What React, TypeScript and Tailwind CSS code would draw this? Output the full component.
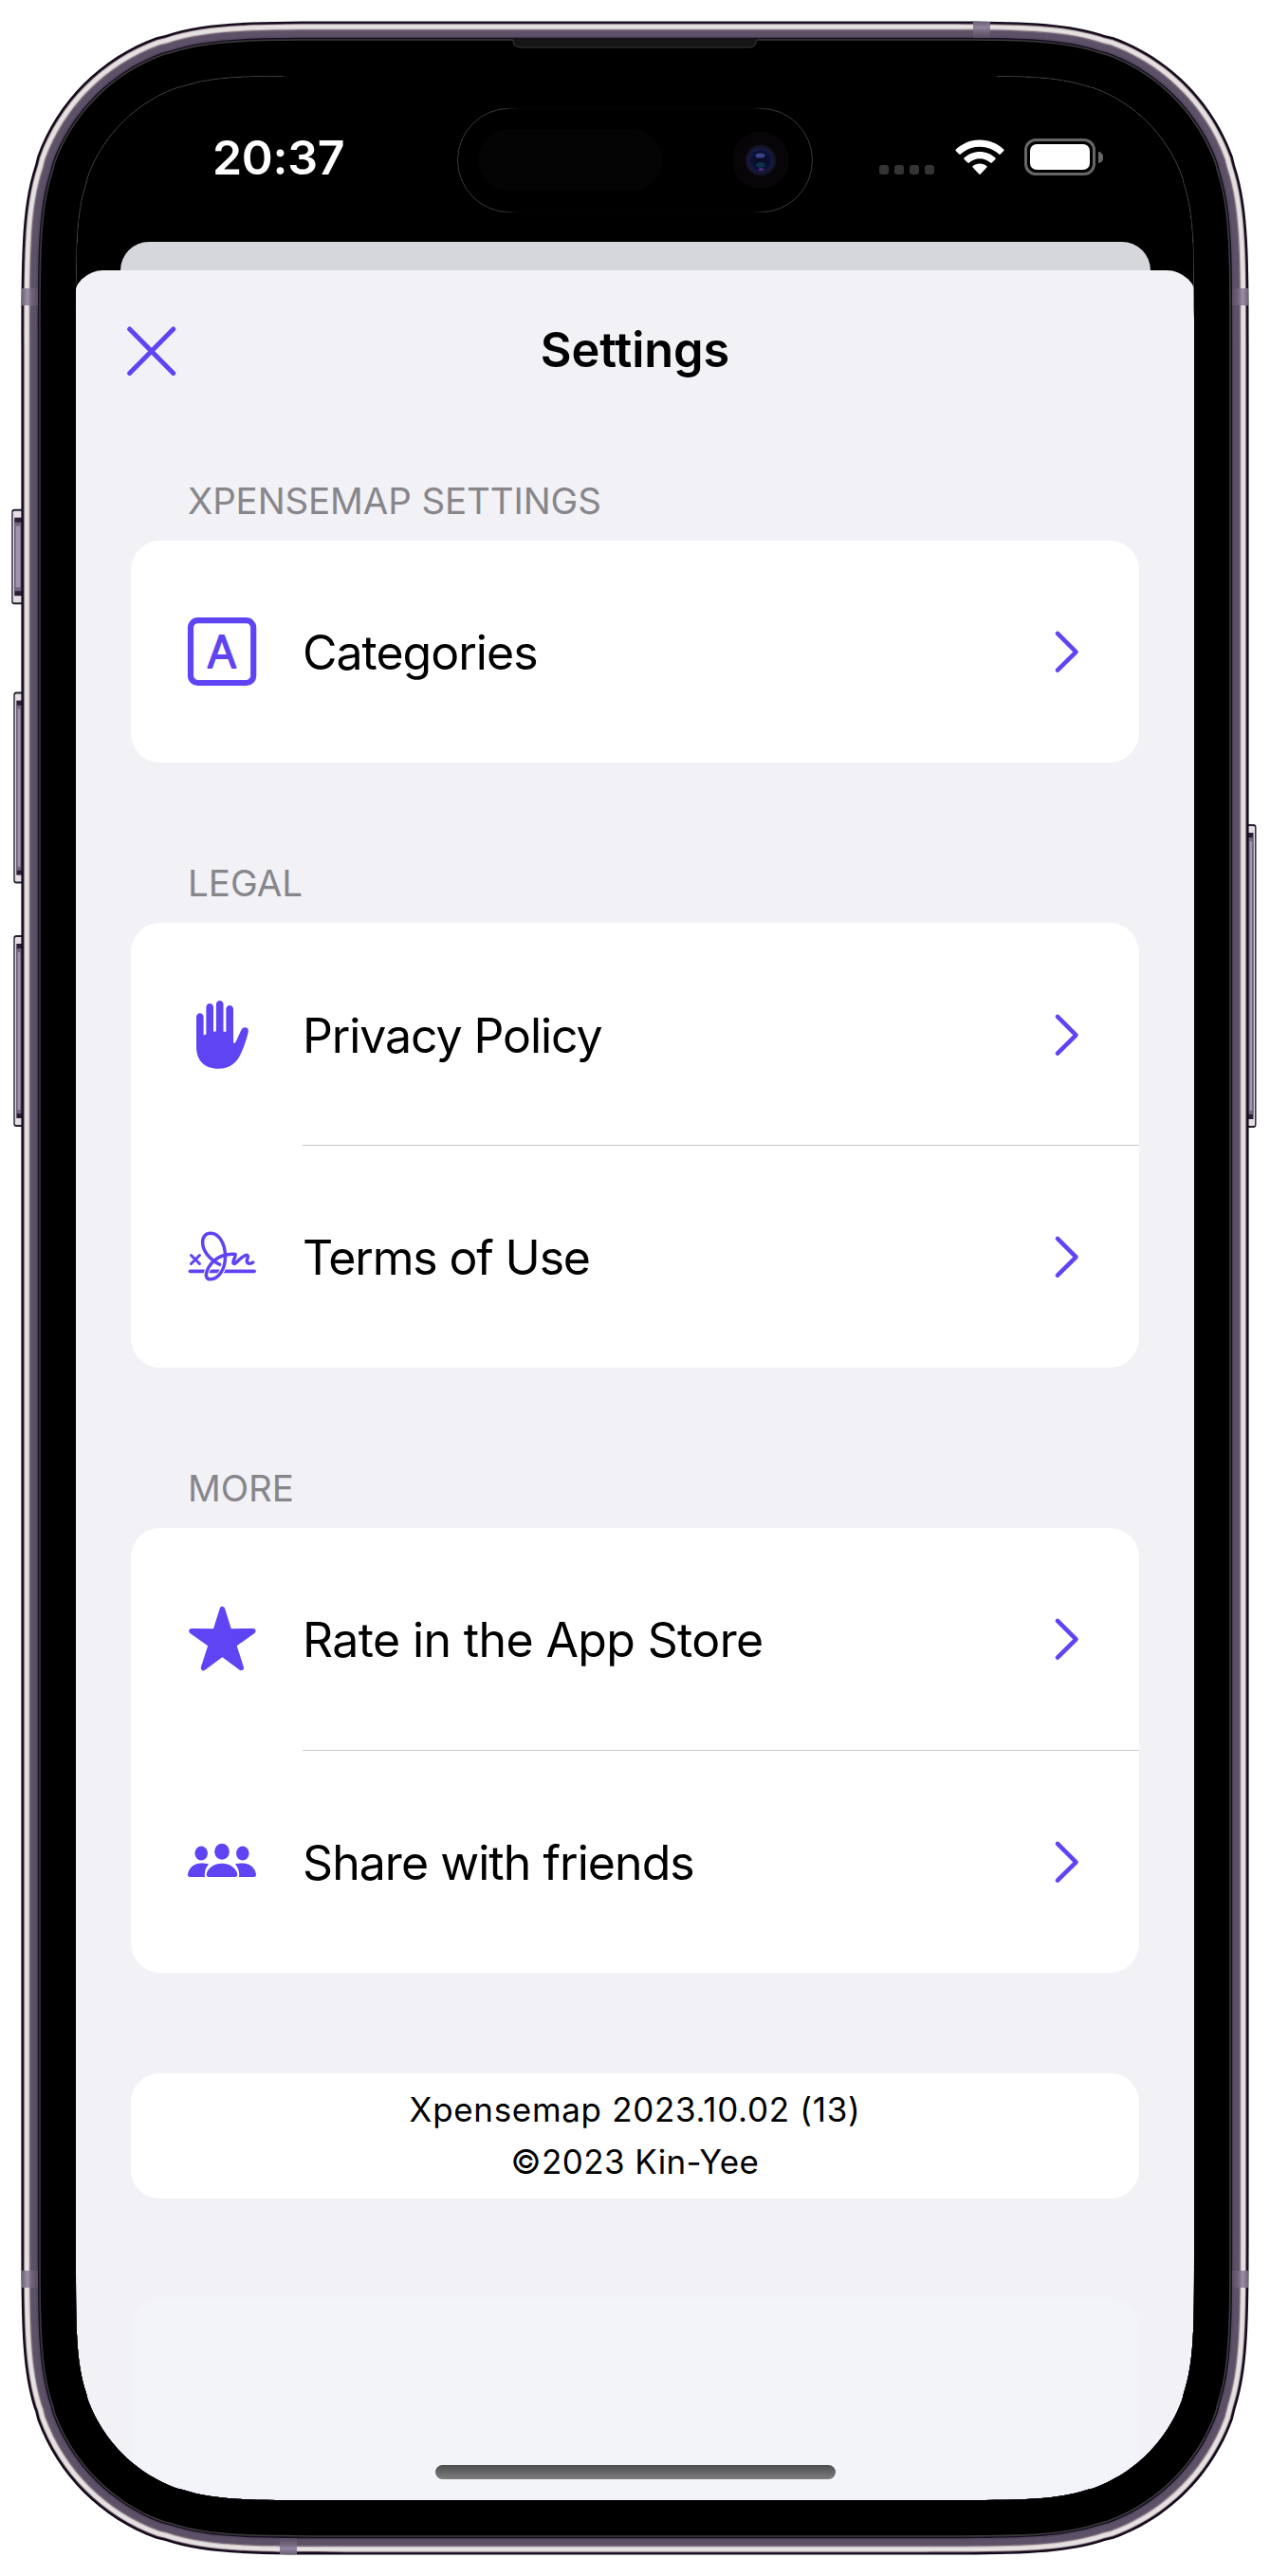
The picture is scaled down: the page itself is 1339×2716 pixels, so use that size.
import React from "react";

const ACCENT = "#5f44f4";

/* Rounded rectangle with continuous-curvature corners. */
function squircle(x: number, y: number, w: number, h: number, r: number) {
  const a = 1.52866 * r, b = 1.08849 * r, c = 0.86841 * r, d = 0.66993 * r, e = 0.0655 * r;
  const f = 0.63149 * r, g = 0.07491 * r, i = 0.37282 * r, j = 0.16906 * r;
  const R = x + w, B = y + h;
  return [
    `M${x + a} ${y}L${R - a} ${y}`,
    `C${R - b} ${y} ${R - c} ${y} ${R - d} ${y + e}L${R - f} ${y + g}`,
    `C${R - i} ${y + j} ${R - j} ${y + i} ${R - g} ${y + f}L${R - e} ${y + d}`,
    `C${R} ${y + c} ${R} ${y + b} ${R} ${y + a}L${R} ${B - a}`,
    `C${R} ${B - b} ${R} ${B - c} ${R - e} ${B - d}L${R - g} ${B - f}`,
    `C${R - j} ${B - i} ${R - i} ${B - j} ${R - f} ${B - g}L${R - d} ${B - e}`,
    `C${R - c} ${B} ${R - b} ${B} ${R - a} ${B}L${x + a} ${B}`,
    `C${x + b} ${B} ${x + c} ${B} ${x + d} ${B - e}L${x + f} ${B - g}`,
    `C${x + i} ${B - j} ${x + j} ${B - i} ${x + g} ${B - f}L${x + e} ${B - d}`,
    `C${x} ${B - c} ${x} ${B - b} ${x} ${B - a}L${x} ${y + a}`,
    `C${x} ${y + b} ${x} ${y + c} ${x + e} ${y + d}L${x + g} ${y + f}`,
    `C${x + j} ${y + i} ${x + i} ${y + j} ${x + f} ${y + g}L${x + d} ${y + e}`,
    `C${x + c} ${y} ${x + b} ${y} ${x + a} ${y}Z`,
  ].join("");
}

const SCREEN_HOLE = squircle(80, 80, 1179, 2556, 168);

function ring(inset: number) {
  return (
    squircle(22.4 + inset, 22.4 + inset, 1294.2 - inset * 2, 2671.2 - inset * 2, 225.5 - inset) + SCREEN_HOLE
  );
}

const RINGS: [number, string][] = [
  [0, "#140b1c"],
  [2.4, "#6a5561"],
  [3.2, "#d9cfcf"],
  [4.2, "#e3e1e2"],
  [7.8, "#c4b4b2"],
  [8.8, "#73677b"],
  [10, "#5c5167"],
  [15.5, "#554a62"],
  [17.4, "#150d1e"],
  [18.8, "#3a3a3a"],
  [20.4, "#000000"],
];

function SideButton({ x, y, w, h, flip }: { x: number; y: number; w: number; h: number; flip?: boolean }) {
  return (
    <g transform={flip ? `translate(${2 * x + w} 0) scale(-1 1)` : undefined}>
      <rect x={x} y={y} width={w + 3} height={h} rx="3" fill="#251c30" />
      <rect x={x + 1.4} y={y + 2} width={w} height={h - 4} rx="1.5" fill="#e4dfe4" />
      <rect x={x + 3} y={y + 9} width={w} height={h - 18} fill="#2a2036" />
      <rect x={x + 3} y={y + 14} width={w} height={h - 28} fill="#71657f" />
      <rect x={x + 4.5} y={y + 18} width={w - 6} height={h - 36} fill="#a094af" />
    </g>
  );
}

function DeviceFrame() {
  return (
    <svg className="pointer-events-none absolute inset-0" width="1339" height="2716" viewBox="0 0 1339 2716">
      <defs>
        <linearGradient id="bandH" x1="0" x2="1" y1="0" y2="0">
          <stop offset="0" stopColor="#6d6077" />
          <stop offset="0.35" stopColor="#9d91a6" />
          <stop offset="0.6" stopColor="#71647b" />
          <stop offset="1" stopColor="#594c63" />
        </linearGradient>
        <linearGradient id="bandV" x1="0" x2="0" y1="0" y2="1">
          <stop offset="0" stopColor="#6d6077" />
          <stop offset="0.35" stopColor="#9186a0" />
          <stop offset="0.6" stopColor="#74677b" />
          <stop offset="1" stopColor="#594c63" />
        </linearGradient>
        <linearGradient id="fadeDown" x1="0" x2="0" y1="80" y2="300" gradientUnits="userSpaceOnUse">
          <stop offset="0.8" stopColor="#444" />
          <stop offset="1" stopColor="#444" stopOpacity="0" />
        </linearGradient>
        <linearGradient id="fadeEnds" x1="482" x2="857" y1="0" y2="0" gradientUnits="userSpaceOnUse">
          <stop offset="0.13" stopColor="#484848" />
          <stop offset="0.17" stopColor="#050505" />
          <stop offset="0.83" stopColor="#050505" />
          <stop offset="0.87" stopColor="#484848" />
        </linearGradient>
        <radialGradient id="lens">
          <stop offset="0" stopColor="#0b0b20" />
          <stop offset="0.6" stopColor="#0a1034" />
          <stop offset="0.72" stopColor="#15174a" />
          <stop offset="0.8" stopColor="#161830" />
          <stop offset="1" stopColor="#10121f" />
        </radialGradient>
        <clipPath id="cornerL"><rect x="78" y="78" width="200" height="215" /></clipPath>
        <clipPath id="cornerR"><rect x="1061" y="78" width="200" height="215" /></clipPath>
      </defs>

      <SideButton x={12.2} y={536.7} w={10.5} h={100.5} />
      <SideButton x={14.3} y={729.6} w={8.5} h={202} />
      <SideButton x={14.3} y={986} w={8.5} h={202} />
      <SideButton x={1316} y={869} w={8.5} h={320} flip />

      {RINGS.map(([inset, fill]) => (
        <path key={inset} d={ring(inset)} fill={fill} fillRule="evenodd" />
      ))}

      <rect x="23" y="304" width="17" height="18" fill="url(#bandH)" />
      <rect x="23" y="2394" width="17" height="18" fill="url(#bandH)" />
      <rect x="1299" y="304" width="17" height="18" fill="url(#bandH)" transform="rotate(180 1307.5 313)" />
      <rect x="1299" y="2394" width="17" height="18" fill="url(#bandH)" transform="rotate(180 1307.5 2403)" />
      <rect x="1026" y="23" width="18" height="17" fill="url(#bandV)" />
      <rect x="295" y="2676" width="18" height="17" fill="url(#bandV)" transform="rotate(180 304 2684.5)" />

      <g fill="none" stroke="url(#fadeDown)" strokeWidth="0.7">
        <path d={SCREEN_HOLE} clipPath="url(#cornerL)" />
        <path d={SCREEN_HOLE} clipPath="url(#cornerR)" />
      </g>

      <path d="M541 41h257c0 6-3 9.300-7 9.300H549c-5 0-8-3.300-8-9.300Z" fill="#151515" />
      <path d="M541 42c0 5 3 8 8 8h241c4 0 7-3 7.500-8" fill="none" stroke="#333" strokeWidth="1.200" />

      <rect x="482.500" y="114.300" width="374" height="109.400" rx="54.700" fill="none" stroke="url(#fadeEnds)" strokeWidth="0.800" />
      <rect x="504" y="136" width="194" height="65.500" rx="32.700" fill="#040404" />
      <circle cx="802" cy="169" r="30" fill="#080509" />
      <circle cx="802" cy="169" r="16.200" fill="url(#lens)" />
      <ellipse cx="801.500" cy="164" rx="5" ry="2.600" fill="#3a4188" />
      <ellipse cx="802" cy="174" rx="5" ry="3" fill="#0b2f4a" />
      <ellipse cx="802.500" cy="178.500" rx="3" ry="1.600" fill="#4c2a78" />
    </svg>
  );
}

function WifiIcon() {
  return (
    <svg width="52" height="38" viewBox="0 0 52 38" fill="#fff">
      <path d="M26 .5C35.800.5 44.700 4.300 51.200 10.500c.5.5.5 1.100.1 1.600l-3.500 3.500c-.5.5-1.100.5-1.600 0C40.800 10.600 33.700 7.800 26 7.800S11.200 10.600 5.800 15.600c-.5.5-1.100.5-1.600 0L.7 12.100c-.4-.5-.4-1.100.1-1.600C7.300 4.300 16.200.5 26 .5Z" />
      <path d="M26 13c6.300 0 12 2.400 16.300 6.300.5.500.5 1.100.1 1.600l-3.700 3.700c-.5.500-1 .4-1.500 0C34.200 21.900 30.300 20.300 26 20.300s-8.200 1.600-11.200 4.300c-.5.400-1 .5-1.500 0l-3.700-3.700c-.4-.5-.4-1.100.1-1.600C14 15.400 19.700 13 26 13Z" />
      <path d="M26 25.500c2.800 0 5.300 1 7.300 2.600.5.500.5 1 .1 1.500l-6.600 7c-.5.500-1.100.5-1.600 0l-6.600-7c-.4-.5-.4-1 .1-1.500 2-1.600 4.500-2.600 7.300-2.600Z" />
    </svg>
  );
}

function StatusBar() {
  return (
    <div className="flex h-[175px] items-start">
      <div className="ml-[144px] mt-[61px] w-[200px] text-[50px] font-semibold leading-[50px] tracking-[-0.3px] text-white">
        20:37
      </div>
      <div className="ml-[502.500px] mt-[66px] flex items-start">
        <div className="mt-[28px] flex gap-[6px]">
          {[0, 1, 2, 3].map((n) => (
            <span key={n} className="size-[10px] rounded-[3px] bg-[#343434]" />
          ))}
        </div>
        <div className="ml-[22px] mt-[0.500px]">
          <WifiIcon />
        </div>
        <div className="ml-[21.500px] flex items-center">
          <div className="h-[39px] w-[75px] rounded-[12px] border-[3px] border-[#666] p-[3px]">
            <div className="h-full rounded-[7px] bg-white" />
          </div>
          <div className="ml-[3px] h-[12px] w-[4.500px] rounded-r-full bg-[#666]" />
        </div>
      </div>
    </div>
  );
}

function LetterIcon() {
  return (
    <svg width="74" height="74" viewBox="0 0 74 74">
      <rect x="4" y="4.200" width="66.200" height="65.800" rx="7.500" fill="none" stroke={ACCENT} strokeWidth="6.200" />
      <text
        x="37"
        y="53.800"
        textAnchor="middle"
        fontFamily="Inter"
        fontSize="46.500"
        fontWeight="300"
        fill={ACCENT}
        stroke={ACCENT}
        strokeWidth="2.200"
        strokeLinejoin="round"
      >
        A
      </text>
    </svg>
  );
}

function HandIcon() {
  return (
    <svg width="74" height="74" viewBox="0 0 74 74" fill={ACCENT}>
      <path d="M10 18.200c0-2.200 1.600-4 3.800-4s3.800 1.800 3.800 4v19.400c.9-.4 1.800-.8 2.800-1V8c0-2.200 1.600-4 3.800-4s3.800 1.800 3.800 4v25.700c.9-.2 1.900-.3 2.900-.3V5c0-2.200 1.600-4 3.800-4s3.800 1.800 3.800 4v28.500c1 .1 2 .3 2.900.6V10c0-2.200 1.600-4 3.800-4s3.800 1.800 3.800 4v34.500c0 1.800 1.700 1.900 2.600 0l5.600-12.300c1-2.400 3.200-3.500 5.400-2.800 2 .7 2.600 2.700 2 5.300-1.500 6.500-3.900 13.500-6.800 20.300C53.500 65.500 46.500 72.800 33 72.800 18.500 72.800 10 63.500 10 50Z" />
    </svg>
  );
}

function SignatureIcon() {
  const loop =
    "M34.200 39.200C24 34 16.400 25.500 16.100 16.500 15.900 10 19.500 6.200 24.500 6.200 32.500 6.200 40 15.800 40 31c0 13.800-7.500 23.800-15.600 23.800-4 0-5.300-3-4.200-7C22.500 39.500 30 31.500 40 29.300c4-.9 8-1.400 10.300-.8";
  return (
    <svg width="74" height="74" viewBox="0 0 74 74" fill="none" stroke={ACCENT} strokeLinecap="round" strokeLinejoin="round">
      <g transform="translate(0.5 6)">
        <path d="M3 46.300h67.500" strokeWidth="3.800" />
        <path d={loop} stroke="#fff" strokeWidth="5.400" />
        <path d={loop} strokeWidth="3.500" />
        <path d="M50.300 28.500c1.300 2.600-2.600 6.500-1.800 9.200 1.700 3.600 8.500-8.700 14.500-8.400 2.500 1.100-1 5-.1 7.500.9 2.100 4.200 1.600 6.300.2" strokeWidth="3.500" />
        <path d="m4 29.500 9 9M13 29.500l-9 9" strokeWidth="3" />
      </g>
    </svg>
  );
}

function StarIcon() {
  return (
    <svg width="74" height="74" viewBox="0 0 74 74">
      <path
        d="m37.400 5.500 7.400 23.500 25-.3-20.400 14.500 7.900 24.300-19.900-14.800-19.900 14.800 7.900-24.300L5 28.700l25 .3Z"
        fill={ACCENT}
        stroke={ACCENT}
        strokeWidth="5.500"
        strokeLinejoin="round"
      />
    </svg>
  );
}

function PeopleIcon() {
  return (
    <svg width="74" height="74" viewBox="0 0 74 74" fill={ACCENT}>
      <ellipse cx="37" cy="27.300" rx="7.800" ry="8.500" />
      <ellipse cx="15.200" cy="29" rx="6.800" ry="7.400" />
      <ellipse cx="58.800" cy="29" rx="6.800" ry="7.400" />
      <path d="M23 40.500C20.800 39.700 18.200 39.400 15.200 39.400 6.700 39.400 1.300 45.500 1 51.800c0 1.300.8 2.200 2.300 2.200h15.800c-1-4.500.6-9.700 3.900-13.500ZM51 40.500c2.200-.8 4.800-1.100 7.800-1.100 8.500 0 13.900 6.100 14.200 12.400 0 1.300-.8 2.200-2.300 2.200H54.900c1-4.500-.6-9.700-3.900-13.500Z" />
      <path d="M37 39.700c9.600 0 16.100 6.500 16.300 11.900 0 1.500-.9 2.400-2.500 2.400H23.200c-1.600 0-2.500-.9-2.500-2.400.2-5.400 6.700-11.900 16.300-11.900Z" />
    </svg>
  );
}

function Chevron() {
  return (
    <svg width="28" height="46" viewBox="0 0 28 46" fill="none" stroke={ACCENT} strokeWidth="4.600" strokeLinecap="round" strokeLinejoin="round">
      <path d="m4 3.900 19.500 19.400L4 42.700" />
    </svg>
  );
}

interface Item {
  label: string;
  icon: React.ReactNode;
  tracking: string;
}

function Row({ item, divided }: { item: Item; divided: boolean }) {
  return (
    <div className={`flex items-center pl-[59px] ${divided ? "-mt-[0.700px] h-[235px]" : "h-[234.300px]"}`}>
      <div className="w-[122px] shrink-0">{item.icon}</div>
      <div
        className={`flex h-full flex-1 items-center justify-between pr-[62px] ${
          divided ? "border-t border-[#cbcbcd]" : ""
        }`}
      >
        <span className={`whitespace-nowrap pt-[2px] text-[50px] leading-[60px] text-black ${item.tracking}`}>{item.label}</span>
        <Chevron />
      </div>
    </div>
  );
}

function Section({ title, tracking, items }: { title: string; tracking: string; items: Item[] }) {
  return (
    <section>
      <h2 className={`flex h-[85px] items-center whitespace-nowrap pl-[60px] text-[38.500px] leading-[46px] text-[#87868b] ${tracking}`}>
        {title}
      </h2>
      <div className="overflow-hidden rounded-[31px] bg-white">
        {items.map((item, n) => (
          <Row key={item.label} item={item} divided={n > 0} />
        ))}
      </div>
    </section>
  );
}

export default function App() {
  return (
    <div className="relative h-[2716px] w-[1339px] overflow-hidden bg-white p-[80px] font-['Inter',sans-serif]">
      <div className="flex h-[2556px] w-[1179px] flex-col overflow-hidden rounded-[140px] bg-black">
        <StatusBar />
        <div className="-mb-[30px] ml-[47px] h-[60px] w-[1085.500px] shrink-0 rounded-t-[30px] bg-[#d6d7db]" />
        <div className="-mx-[3px] flex h-[2351px] shrink-0 flex-col rounded-t-[32px] bg-[#f2f1f6] px-[61px]">
          <header className="relative flex h-[170px] shrink-0 items-center justify-center">
            <button className="absolute left-[-5px] top-[57.500px]" aria-label="Close">
              <svg width="54" height="54" viewBox="0 0 54 54" fill="none" stroke={ACCENT} strokeWidth="5" strokeLinecap="round">
                <path d="m3.700 4 46 46.500M49.700 4l-46 46.500" />
              </svg>
            </button>
            <h1 className="pb-[2px] text-[50.500px] font-semibold leading-[60px] tracking-[-0.1px] text-black">Settings</h1>
          </header>
          <div className="mt-[30px] flex flex-col gap-[84.200px]">
            <Section
              title="XPENSEMAP SETTINGS"
              tracking="tracking-[-0.12px]"
              items={[{ label: "Categories", icon: <LetterIcon />, tracking: "tracking-[-1px]" }]}
            />
            <Section
              title="LEGAL"
              tracking="tracking-[0px]"
              items={[
                { label: "Privacy Policy", icon: <HandIcon />, tracking: "tracking-[-1.1px]" },
                { label: "Terms of Use", icon: <SignatureIcon />, tracking: "tracking-[-1.15px]" },
              ]}
            />
            <Section
              title="MORE"
              tracking="tracking-[-0.1px]"
              items={[
                { label: "Rate in the App Store", icon: <StarIcon />, tracking: "tracking-[-0.63px]" },
                { label: "Share with friends", icon: <PeopleIcon />, tracking: "tracking-[-0.95px]" },
              ]}
            />
          </div>
          <footer className="mt-[106px] flex h-[132.500px] shrink-0 flex-col items-center justify-center rounded-[30px] bg-white text-[35px] leading-[55px] text-black">
            <span className="tracking-[0.68px]">Xpensemap 2023.10.02 (13)</span>
            <span className="tracking-[0.4px]">©2023 Kin-Yee</span>
          </footer>
          <div className="mt-[105px] flex flex-1 items-end justify-center rounded-t-[31px] bg-[#f3f4f9] pb-[22px]">
            <div className="h-[15px] w-[422px] rounded-full bg-linear-to-b from-[#4c4f4f] to-[#7f7e80]" />
          </div>
        </div>
      </div>
      <DeviceFrame />
    </div>
  );
}
